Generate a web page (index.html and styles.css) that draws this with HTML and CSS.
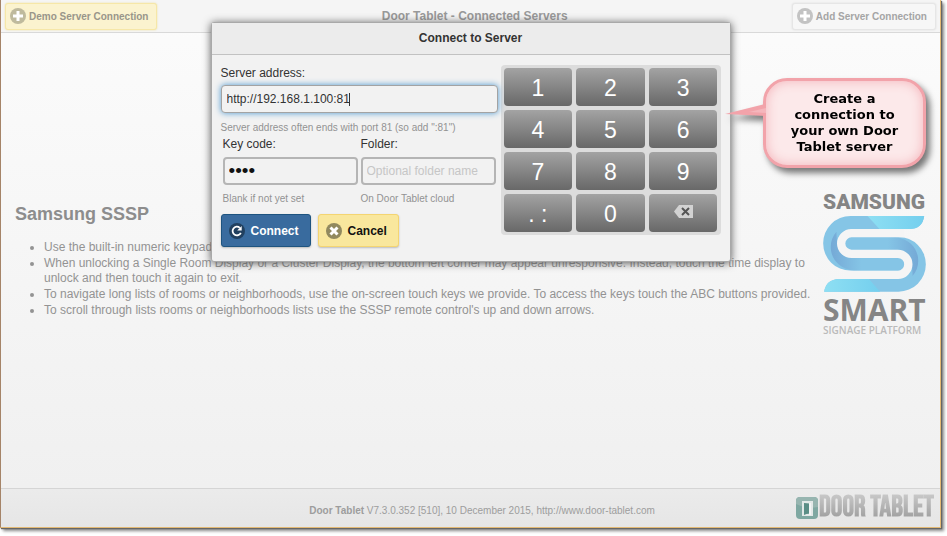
FILE: index.html
```html
<!DOCTYPE html>
<html lang="en">
<head>
<meta charset="utf-8">
<title>Door Tablet - Connected Servers</title>
<link rel="stylesheet" href="styles.css">
</head>
<body>
<div class="app">
  <header class="topbar">
    <button class="bar-btn bar-btn-demo" type="button">
      <svg class="icon" viewBox="0 0 16 16" aria-hidden="true"><circle cx="8" cy="8" r="8" fill="#bfba9d"/><path d="M8 3v10M3 8h10" stroke="#fff" stroke-width="3"/></svg>
      Demo Server Connection
    </button>
    <h1 class="title">Door Tablet - Connected Servers</h1>
    <button class="bar-btn bar-btn-add" type="button">
      <svg class="icon" viewBox="0 0 16 16" aria-hidden="true"><circle cx="8" cy="8" r="8" fill="#c3c3c3"/><path d="M8 3v10M3 8h10" stroke="#fff" stroke-width="3"/></svg>
      Add Server Connection
    </button>
  </header>

  <main class="main">
    <article class="notes">
      <h2>Samsung SSSP</h2>
      <ul>
        <li>Use the built-in numeric keypad to enter the server address.</li>
        <li>When unlocking a Single Room Display or a Cluster Display, the bottom left corner may appear unresponsive. Instead, touch the time display to unlock and then touch it again to exit.</li>
        <li>To navigate long lists of rooms or neighborhoods, use the on-screen touch keys we provide. To access the keys touch the ABC buttons provided.</li>
        <li>To scroll through lists rooms or neighborhoods lists use the SSSP remote control's up and down arrows.</li>
      </ul>
    </article>
    <aside class="samsung">
      <div class="samsung-name">SAMSUNG</div>
      <svg class="samsung-mark" viewBox="102 108 308 228" aria-hidden="true">
        <defs>
          <linearGradient id="cyan" x1="0" x2="1"><stop offset="0" stop-color="#8edff3"/><stop offset="1" stop-color="#74cfee"/></linearGradient>
          <linearGradient id="inner" x1="0" x2="1"><stop offset="0" stop-color="#75a9d6"/><stop offset=".45" stop-color="#85c5e6"/><stop offset="1" stop-color="#85c5e6"/></linearGradient>
          <linearGradient id="innerEnd" x1="1" x2="0"><stop offset="0" stop-color="#75a9d6"/><stop offset=".45" stop-color="#85c5e6"/><stop offset="1" stop-color="#85c5e6"/></linearGradient>
        </defs>
        <path fill="#85c5e6" d="M405 108H184A82 82 0 0 0 184 272H328V297H150Q111 298 105 335H328A82 82 0 0 0 328 171H184V147H360Q400 147 405 108Z"/>
        <path fill="url(#inner)" d="M142 155C110 190 120 262 194 272H330V234H180Q140 225 142 155Z"/>
        <path fill="url(#innerEnd)" d="M370 288C402 253 392 181 318 171H184V209H332Q372 218 370 288Z"/>
        <path fill="url(#cyan)" d="M235 108H405Q400 147 360 147H271Z"/>
        <path fill="url(#cyan)" d="M273 335H105Q111 298 150 297H239Z"/>
        <path fill="none" stroke="#f5f5f5" stroke-width="25" d="M345 159.500H187A31 31 0 0 0 187 221.500H326A31 31 0 0 1 326 284.500H168"/>
      </svg>
      <div class="samsung-smart">SMART</div>
      <div class="samsung-sub">SIGNAGE PLATFORM</div>
    </aside>
  </main>

  <footer class="footer">
    <p class="version"><b>Door Tablet</b> V7.3.0.352 [510], 10 December 2015, http://www.door-tablet.com</p>
    <div class="brand">
      <svg class="brand-icon" viewBox="0 0 22 22" aria-hidden="true"><rect width="22" height="22" rx="4" fill="#7fa8a2"/><path d="M0 4a4 4 0 0 1 4-4h14a4 4 0 0 1 4 4v6Q10 12 0 7Z" fill="#97b5b0"/><path d="M7 5h9v13H7Z" fill="none" stroke="#e3e9e8" stroke-width="2"/><path d="M8 6l5 1v9l-5 2Z" fill="#5b8e86"/><path d="M14 6v12" stroke="#f3f5f5" stroke-width="2"/></svg>
      <span class="brand-name">DOOR TABLET</span>
    </div>
  </footer>

  <section class="dialog" role="dialog" aria-labelledby="dialog-title">
    <h2 class="dialog-title" id="dialog-title">Connect to Server</h2>
    <div class="dialog-body">
      <form class="form">
        <label for="address">Server address:</label>
        <div class="address-box"><input class="field field-focus" id="address" type="text" value="http://192.168.1.100:81"></div>
        <p class="hint">Server address often ends with port 81 (so add ":81")</p>
        <div class="pair">
          <div class="cell">
            <label for="code">Key code:</label>
            <input class="field field-code" id="code" type="password" value="1234">
            <p class="hint">Blank if not yet set</p>
          </div>
          <div class="cell">
            <label for="folder">Folder:</label>
            <input class="field" id="folder" type="text" placeholder="Optional folder name">
            <p class="hint">On Door Tablet cloud</p>
          </div>
        </div>
        <div class="actions">
          <button class="action action-connect" type="button">
            <svg class="icon" viewBox="0 0 16 16" aria-hidden="true"><circle cx="8" cy="8" r="8" fill="#21405f"/><path d="M11.800 9.800A4.300 4.300 0 1 1 10.800 4.800" fill="none" stroke="#fff" stroke-width="1.800"/><path d="M12.700 3v4.500H8.200Z" fill="#fff"/></svg>
            Connect
          </button>
          <button class="action action-cancel" type="button">
            <svg class="icon" viewBox="0 0 16 16" aria-hidden="true"><circle cx="8" cy="8" r="8" fill="#91895f"/><path d="M4.500 4.500l7 7M11.500 4.500l-7 7" stroke="#fff" stroke-width="3"/></svg>
            Cancel
          </button>
        </div>
      </form>
      <div class="keypad">
        <button type="button">1</button><button type="button">2</button><button type="button">3</button>
        <button type="button">4</button><button type="button">5</button><button type="button">6</button>
        <button type="button">7</button><button type="button">8</button><button type="button">9</button>
        <button type="button">. :</button><button type="button">0</button>
        <button class="key-erase" type="button" aria-label="Backspace"><svg viewBox="0 0 19 13" aria-hidden="true"><path d="M0 6.500 5 0H19V13H5Z" fill="#d2d2d2"/><path d="M8 3l7 7M15 3l-7 7" stroke="#555" stroke-width="2"/></svg></button>
      </div>
    </div>
  </section>

  <div class="callout">
    <svg class="callout-tail" viewBox="0 0 41 14" aria-hidden="true"><path d="M0 10 40 0 41 12Z" fill="#f2a3aa"/><path d="M24 8 41 4V9Z" fill="#f5b6bc"/></svg>
    <p>Create a connection to your own Door Tablet server</p>
  </div>
</div>
</body>
</html>
```
FILE: styles.css
```css
* {
  box-sizing: border-box;
}

body {
  margin: 0;
  padding: 0 6px 8px 0;
  background: #fff;
  color: #333;
  font-family: "Liberation Sans", Arial, sans-serif;
  font-size: 12px;
  line-height: 14px;
}

h1, h2, p, ul {
  margin: 0;
}

button, input {
  font-family: inherit;
}

.app {
  position: relative;
  display: flex;
  flex-direction: column;
  min-height: calc(100vh - 8px);
  border: 1px solid #e3b974;
  border-top: 0;
  border-left-color: #a58468;
  background: linear-gradient(#fcfcfc, #efefef);
  box-shadow: 1px 1px 1px #666, 3px 3px 3px #888;
}

.topbar {
  display: flex;
  justify-content: space-between;
  align-items: center;
  height: 33px;
  padding: 0 4px;
  border-bottom: 1px solid #d9d9d9;
  background: #f5f5f5;
}

.title {
  color: #999;
  font-size: 12px;
}

.bar-btn {
  display: flex;
  align-items: center;
  gap: 3px;
  height: 27px;
  padding: 0 8px 0 4px;
  border: 1px solid #e6e6e6;
  border-radius: 3px;
  background: #f7f7f7;
  box-shadow: 0 0 2px #ddd;
  color: #a5a5a5;
  font-size: 10px;
  font-weight: bold;
}

.bar-btn-demo {
  border-color: #f6e7a8;
  background: #fbf3cf;
  box-shadow: 0 0 2px #eedf9e;
  color: #99968a;
}

.icon {
  width: 16px;
  height: 16px;
}

.main {
  display: flex;
  flex: 1;
  align-items: flex-start;
  justify-content: space-between;
  gap: 8px;
  padding: 161px 13px 0 14px;
  color: #939393;
}

.notes {
  flex: 1;
  padding-top: 10px;
}

.notes h2 {
  color: #8d8d8d;
  font-size: 18px;
  line-height: 20px;
}

.notes ul {
  margin-top: 16px;
  padding-left: 29px;
}

.notes li {
  margin-bottom: 1px;
  line-height: 15px;
}

.samsung {
  display: flex;
  flex-direction: column;
  width: 104px;
  color: #858585;
}

.samsung-name {
  font-family: Roboto, "Liberation Sans", sans-serif;
  font-size: 21px;
  font-weight: 900;
  line-height: 17px;
}

.samsung-mark {
  width: 103px;
  height: 76px;
  margin-top: 5px;
}

.samsung-smart {
  margin-top: 6px;
  font-family: "Open Sans", sans-serif;
  font-size: 30px;
  font-weight: bold;
  line-height: 24px;
}

.samsung-sub {
  margin-top: 2px;
  color: #bababa;
  font-family: "Open Sans", sans-serif;
  font-size: 10px;
  font-weight: 600;
  line-height: 12px;
  white-space: nowrap;
}

.footer {
  display: flex;
  align-items: center;
  height: 39px;
  padding: 0 6px 0 167px;
  border-top: 1px solid #d5d5d5;
  background: linear-gradient(#ebebeb, #e6e6e6);
}

.version {
  flex: 1;
  padding-top: 6px;
  color: #9d9d9d;
  font-size: 10px;
  text-align: center;
}

.brand {
  display: flex;
  align-items: center;
  gap: 1px;
}

.brand-icon {
  width: 22px;
  height: 22px;
}

.brand-name {
  background: linear-gradient(#c9c9c9, #999);
  background-clip: text;
  color: transparent;
  font-family: "Bebas Neue", "Open Sans Condensed", "Liberation Sans Narrow", "Liberation Sans", sans-serif;
  font-size: 29px;
  font-weight: bold;
  line-height: 28px;
  white-space: nowrap;
}

.dialog {
  position: absolute;
  top: 22px;
  left: 50%;
  width: 520px;
  margin-left: -260px;
  border: 1px solid #a9a9a9;
  border-radius: 3px;
  background: #f2f2f2;
  box-shadow: 0 1px 8px #555;
}

.dialog-title {
  border-bottom: 1px solid #c2c2c2;
  background: #ececec;
  font-size: 12px;
  line-height: 31px;
  text-align: center;
}

.dialog-body {
  display: flex;
  gap: 3px;
  padding: 11px 9px 14px;
}

.form {
  flex: 1;
}

.form label {
  display: block;
}

.field {
  display: block;
  width: 100%;
  height: 28px;
  padding: 0 4px;
  border: 2px solid #b5b5b5;
  border-radius: 4px;
  background: #f2f2f2;
  color: #333;
  font-size: 12px;
}

.field::placeholder {
  color: #c6c6c6;
}

.field-code {
  color: #111;
  font-size: 19px;
}

.field-focus {
  padding: 0 5px;
  border: 1px solid #a3a3a3;
  box-shadow: 0 0 6px #4c97d0;
}

.address-box {
  position: relative;
  margin: 5px 0 9px;
}

.address-box::after {
  content: "";
  position: absolute;
  top: 8px;
  left: 128px;
  width: 1px;
  height: 13px;
  background: #333;
}

.hint {
  color: #929292;
  font-size: 10px;
  line-height: 12px;
}

.pair {
  display: flex;
  gap: 3px;
  padding: 3px 2px 0;
}

.cell {
  flex: 1;
}

.cell .field {
  margin: 6px 0 8px;
}

.actions {
  display: flex;
  gap: 7px;
  margin-top: 9px;
}

.action {
  display: flex;
  align-items: center;
  gap: 6px;
  height: 33px;
  padding: 0 11px 0 7px;
  border: 1px solid #1e5480;
  border-radius: 3px;
  background: #396b9e;
  box-shadow: 0 1px 2px #bbb;
  color: #fff;
  font-size: 12px;
  font-weight: bold;
}

.action-cancel {
  border-color: #f4d572;
  background: #f9e79d;
  color: #111;
}

.keypad {
  display: grid;
  grid-template-columns: repeat(3, 1fr);
  grid-auto-rows: 38px;
  gap: 4px;
  align-self: flex-start;
  width: 220px;
  margin-top: -1px;
  padding: 3px;
  border-radius: 4px;
  background: #dcdcdc;
}

.keypad button {
  padding: 2px 0 0;
  border: 0;
  border-radius: 4px;
  background: linear-gradient(#a3a3a3, #686868);
  color: #fff;
  font-size: 23px;
}

.keypad .key-erase {
  padding: 0 0 6px;
}

.key-erase svg {
  width: 19px;
  height: 13px;
}

.callout {
  position: absolute;
  top: 78px;
  right: 14px;
  width: 163px;
  padding: 10px 20px;
  border: 3px solid #f2a3aa;
  border-radius: 24px;
  background: #fce9ea;
  box-shadow: inset 0 0 12px #f4b4ba;
  filter: drop-shadow(4px 5px 3px #777);
  color: #000;
  font-family: "DejaVu Sans", Verdana, sans-serif;
  font-size: 13px;
  font-weight: bold;
  line-height: 16px;
  text-align: center;
}

.callout-tail {
  position: absolute;
  top: 23px;
  left: -41px;
  width: 41px;
  height: 14px;
}
```
